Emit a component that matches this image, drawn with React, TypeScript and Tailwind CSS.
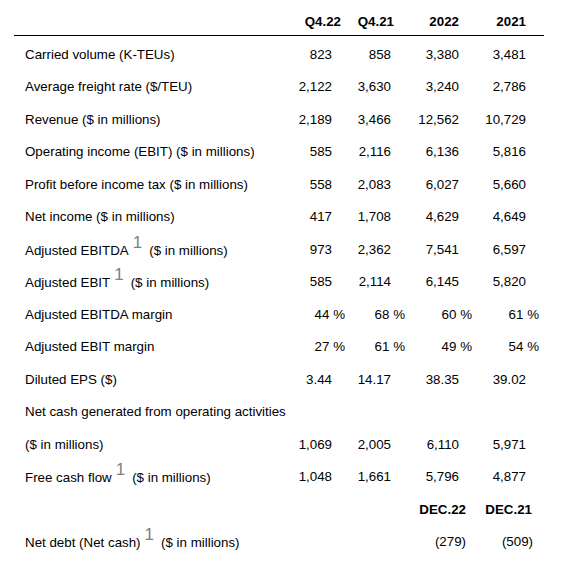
type Kind = 'num' | 'pct' | 'text' | 'dec' | 'debt';

type Row = {
  label: string;
  sup?: boolean;
  kind: Kind;
  values: string[];
};

const ROWS: Row[] = [
  { label: 'Carried volume (K-TEUs)', kind: 'num', values: ['823', '858', '3,380', '3,481'] },
  { label: 'Average freight rate ($/TEU)', kind: 'num', values: ['2,122', '3,630', '3,240', '2,786'] },
  { label: 'Revenue ($ in millions)', kind: 'num', values: ['2,189', '3,466', '12,562', '10,729'] },
  { label: 'Operating income (EBIT) ($ in millions)', kind: 'num', values: ['585', '2,116', '6,136', '5,816'] },
  { label: 'Profit before income tax ($ in millions)', kind: 'num', values: ['558', '2,083', '6,027', '5,660'] },
  { label: 'Net income ($ in millions)', kind: 'num', values: ['417', '1,708', '4,629', '4,649'] },
  { label: 'Adjusted EBITDA', sup: true, kind: 'num', values: ['973', '2,362', '7,541', '6,597'] },
  { label: 'Adjusted EBIT', sup: true, kind: 'num', values: ['585', '2,114', '6,145', '5,820'] },
  { label: 'Adjusted EBITDA margin', kind: 'pct', values: ['44 %', '68 %', '60 %', '61 %'] },
  { label: 'Adjusted EBIT margin', kind: 'pct', values: ['27 %', '61 %', '49 %', '54 %'] },
  { label: 'Diluted EPS ($)', kind: 'num', values: ['3.44', '14.17', '38.35', '39.02'] },
  { label: 'Net cash generated from operating activities', kind: 'text', values: ['', '', '', ''] },
  { label: '($ in millions)', kind: 'num', values: ['1,069', '2,005', '6,110', '5,971'] },
  { label: 'Free cash flow', sup: true, kind: 'num', values: ['1,048', '1,661', '5,796', '4,877'] },
  { label: '', kind: 'dec', values: ['', '', 'DEC.22', 'DEC.21'] },
  { label: 'Net debt (Net cash)', sup: true, kind: 'debt', values: ['', '', '(279)', '(509)'] },
];

const COL_W = ['w-[55px]', 'w-[60px]', 'w-[67px]', 'w-[67px]'];

const PAD: Record<Kind, string[]> = {
  num: ['pr-[13px]', 'pr-[14px]', 'pr-[13px]', 'pr-[13px]'],
  pct: ['pr-0', 'pr-0', 'pr-0', 'pr-0'],
  text: ['pr-0', 'pr-0', 'pr-0', 'pr-0'],
  dec: ['pr-0', 'pr-0', 'pr-[6px]', 'pr-[7px]'],
  debt: ['pr-0', 'pr-0', 'pr-[6px]', 'pr-[6px]'],
};

const HEAD = ['Q4.22', 'Q4.21', '2022', '2021'];
const HEAD_PAD = ['pr-[4px]', 'pr-[11px]', 'pr-[13px]', 'pr-[13px]'];

function Sup() {
  return (
    <span className="relative -top-[7px] ml-[4px] mr-[7px] text-[17px] leading-none font-light text-[#808080]">1</span>
  );
}

export default function App() {
  return (
    <div
      className="h-[574px] w-[567px] bg-white pl-[14px] text-[13.33px] leading-[15px] text-black"
      style={{ fontFamily: '"Liberation Sans", Arial, sans-serif' }}
    >
      <div className="w-[530px]">
        <div className="flex h-[36px] items-end border-b border-black pb-[6px]">
          <div className="flex-1" />
          {HEAD.map((h, i) => (
            <div key={h} className={`${COL_W[i]} ${HEAD_PAD[i]} text-right font-bold`}>
              {h}
            </div>
          ))}
          <div className="w-[5px]" />
        </div>

        <div className="pt-[2px]">
          {ROWS.map((row, r) => (
            <div key={r} className="flex h-[32.5px] items-center">
              <div className="flex-1 whitespace-nowrap pl-[11px]">
                {row.label}
                {row.sup && <Sup />}
                {row.sup && '($ in millions)'}
              </div>
              {row.values.map((v, i) => (
                <div
                  key={i}
                  className={`${COL_W[i]} ${PAD[row.kind][i]} text-right ${row.kind === 'dec' ? 'font-bold' : ''}`}
                >
                  {v}
                </div>
              ))}
              <div className="w-[5px]" />
            </div>
          ))}
        </div>
      </div>
    </div>
  );
}
